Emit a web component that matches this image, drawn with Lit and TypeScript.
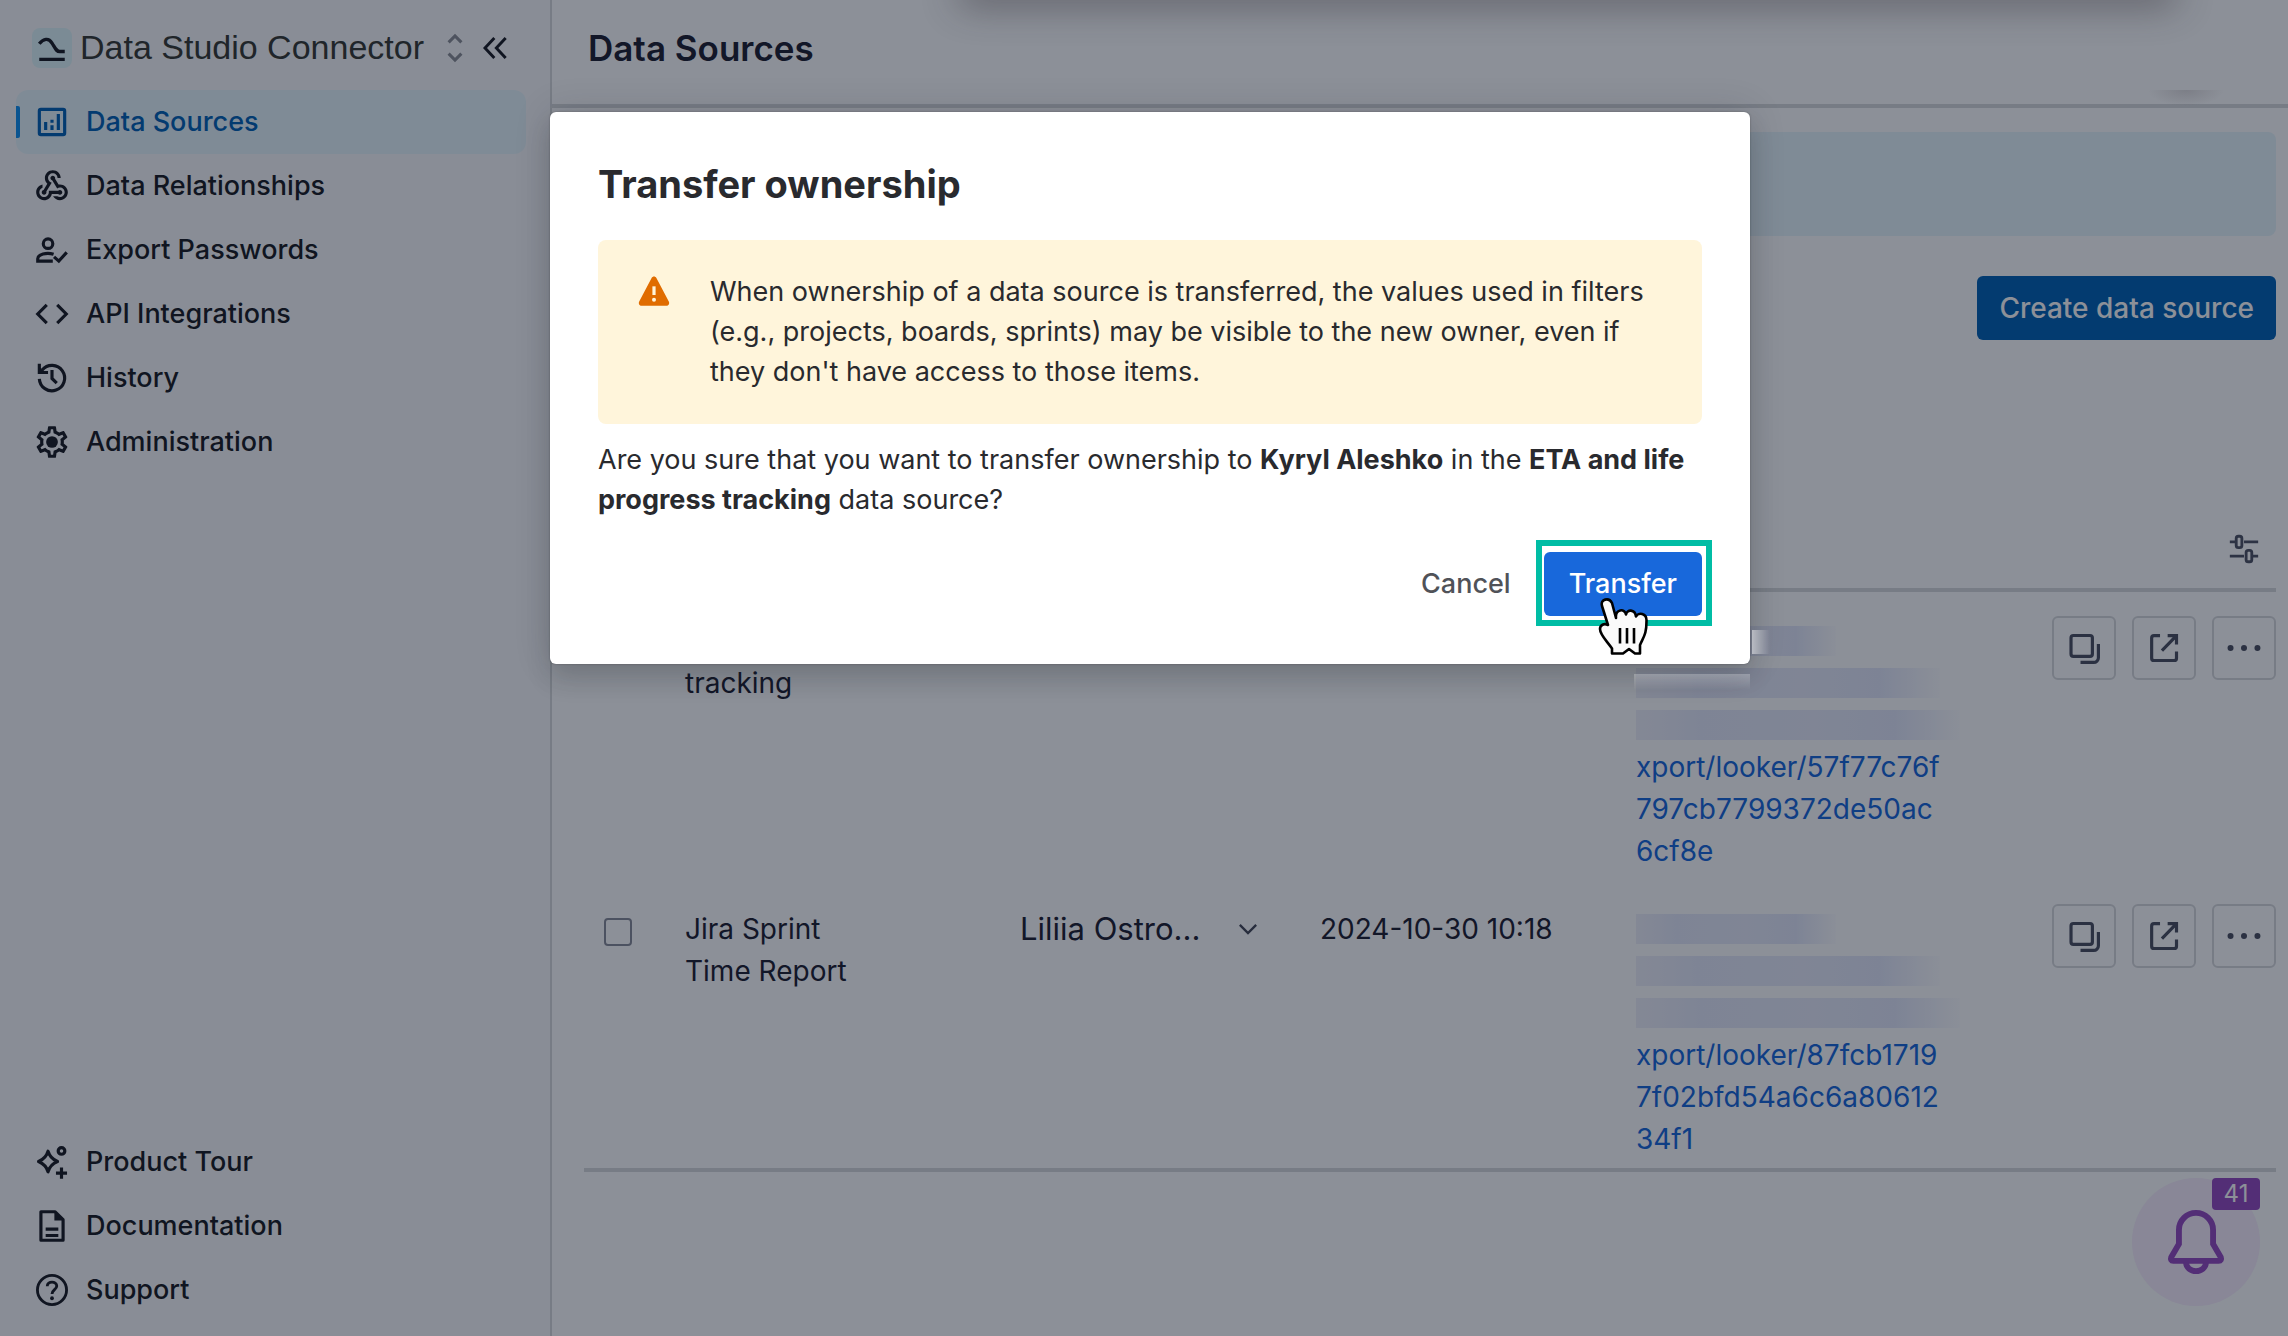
import { LitElement, html, css, svg, type TemplateResult } from "lit";
import { customElement, property } from "lit/decorators.js";

const icons: Record<string, TemplateResult> = {
  chart: svg`<rect x="4" y="4" width="16" height="16" rx="1" fill="none" stroke="currentColor" stroke-width="2"/><path d="M7 12h2v5H7zM11 14h2v3h-2zM11 10.500h2v2h-2zM15 7h2v10h-2z"/>`,
  webhook: svg`<path d="M10 15h5.880c.27-.31.67-.5 1.120-.5.83 0 1.500.67 1.500 1.500s-.67 1.500-1.500 1.500c-.44 0-.84-.19-1.120-.5H11.900c-.46 2.280-2.480 4-4.900 4-2.760 0-5-2.240-5-5 0-2.420 1.720-4.440 4-4.900v2.070c-1.160.41-2 1.530-2 2.830 0 1.650 1.350 3 3 3s3-1.350 3-3v-1zm2.500-11c1.650 0 3 1.350 3 3h2c0-2.760-2.240-5-5-5s-5 2.240-5 5c0 1.430.6 2.710 1.550 3.620l-2.350 3.900c-.68.14-1.200.75-1.200 1.480 0 .83.67 1.500 1.500 1.500s1.500-.67 1.500-1.500c0-.16-.02-.31-.07-.45l3.380-5.630C10.490 9.610 9.500 8.420 9.500 7c0-1.650 1.350-3 3-3zm4.500 9c-.64 0-1.230.2-1.720.54l-3.050-5.070C11.530 8.350 11 7.740 11 7c0-.83.67-1.500 1.500-1.500S14 6.170 14 7c0 .15-.02.29-.06.43l2.190 3.650c.28-.05.57-.08.87-.08 2.760 0 5 2.240 5 5s-2.240 5-5 5c-1.850 0-3.470-1.010-4.330-2.500h2.670c.48.32 1.050.5 1.660.5 1.650 0 3-1.350 3-3s-1.350-3-3-3z"/>`,
  person: svg`<g fill="none" stroke="currentColor" stroke-width="2"><circle cx="9.500" cy="8" r="3"/><path d="M13 14.700C8.500 13.200 3 14.800 3 17.500V19h9.500"/><path d="M13.300 16.300l3 2.700 5-5.500"/></g>`,
  code: svg`<path d="M8.700 6.300L3 12l5.700 5.700M15.300 6.300L21 12l-5.700 5.700" fill="none" stroke="currentColor" stroke-width="2"/>`,
  history: svg`<g fill="none" stroke="currentColor" stroke-width="2"><path d="M4 12.500A8 8 0 1 0 5.800 7"/><path d="M12 7v5.300l3 3" /><path d="M4 3v5.500h5.500"/></g><path d="M4 5l4.500 4H4z"/>`,
  gear: svg`<path d="M19.430 12.980c.04-.32.07-.64.07-.98 0-.34-.03-.66-.07-.98l2.110-1.650c.19-.15.24-.42.12-.64l-2-3.460c-.09-.16-.26-.25-.44-.25-.06 0-.12.01-.17.03l-2.490 1c-.52-.4-1.080-.73-1.690-.98l-.38-2.650C14.460 2.180 14.250 2 14 2h-4c-.25 0-.46.18-.49.42l-.38 2.650c-.61.25-1.170.59-1.690.98l-2.490-1c-.06-.02-.12-.03-.18-.03-.17 0-.34.09-.43.25l-2 3.460c-.13.22-.07.49.12.64l2.110 1.650c-.04.32-.07.65-.07.98 0 .33.03.66.07.98l-2.110 1.650c-.19.15-.24.42-.12.64l2 3.460c.09.16.26.25.44.25.06 0 .12-.01.17-.03l2.490-1c.52.4 1.080.73 1.690.98l.38 2.650c.03.24.24.42.49.42h4c.25 0 .46-.18.49-.42l.38-2.650c.61-.25 1.170-.59 1.690-.98l2.490 1c.06.02.12.03.18.03.17 0 .34-.09.43-.25l2-3.460c.12-.22.07-.49-.12-.64l-2.110-1.650zm-1.980-1.710c.04.31.05.52.05.73 0 .21-.02.43-.05.73l-.14 1.130.89.7 1.080.84-.7 1.210-1.270-.51-1.040-.42-.9.68c-.43.32-.84.56-1.250.73l-1.060.43-.16 1.130-.2 1.350h-1.400l-.19-1.350-.16-1.130-1.060-.43c-.43-.18-.83-.41-1.230-.71l-.91-.7-1.060.43-1.270.51-.7-1.210 1.080-.84.89-.7-.14-1.130c-.03-.31-.05-.54-.05-.74s.02-.43.05-.73l.14-1.130-.89-.7-1.080-.84.7-1.210 1.270.51 1.040.42.9-.68c.43-.32.84-.56 1.250-.73l1.060-.43.16-1.130.2-1.350h1.390l.19 1.350.16 1.130 1.060.43c.43.18.83.41 1.230.71l.91.7 1.060-.43 1.270-.51.7 1.210-1.070.85-.89.7.14 1.130z" fill-rule="evenodd"/><circle cx="12" cy="12" r="3.700"/>`,
  tour: svg`<path d="M9.500 5.200c1 3.500 2.500 5 6 6.500-3.500 1.400-5 3-6 6.500-1-3.500-2.500-5-6-6.500 3.500-1.500 5-3 6-6.500z" fill="none" stroke="currentColor" stroke-width="2" stroke-linejoin="round"/><circle cx="18" cy="5" r="2.100" fill="none" stroke="currentColor" stroke-width="2"/><path d="M18 15.500v7M14.500 19h7" stroke="currentColor" stroke-width="2"/>`,
  doc: svg`<path d="M5 3h9l5 5v13H5z" fill="none" stroke="currentColor" stroke-width="2" stroke-linejoin="round"/><path d="M13.500 3v5.500H19zM8 13h8v2H8zM8 17h8v2H8z"/>`,
  help: svg`<circle cx="12" cy="12" r="9.200" fill="none" stroke="currentColor" stroke-width="1.800"/><path d="M9 9.600C9 6.200 15 6.200 15 9.500c0 2.200-3 2.400-3 5" fill="none" stroke="currentColor" stroke-width="1.800"/><circle cx="12" cy="17.200" r="1.200"/>`,
  copy: svg`<rect x="3.800" y="4.100" width="13.500" height="13.200" rx="1.500" fill="none" stroke="currentColor" stroke-width="2"/><path d="M21.100 9.500v8.600a3 3 0 0 1-3 3H9.800" fill="none" stroke="currentColor" stroke-width="2"/>`,
  open: svg`<path d="M9.500 4.200H5.700A1.500 1.500 0 0 0 4.200 5.700v12.700a1.500 1.500 0 0 0 1.500 1.500h12.700a1.500 1.500 0 0 0 1.500-1.500V14.200M14.300 4.200h5.600v5.600M19.900 4.200l-9.200 9.500" fill="none" stroke="currentColor" stroke-width="2"/>`,
  more: svg`<circle cx="3.500" cy="12" r="1.900"/><circle cx="12" cy="12" r="1.900"/><circle cx="20.500" cy="12" r="1.900"/>`,
  sliders: svg`<g fill="none" stroke="currentColor" stroke-width="2"><path d="M2 7h4M12 7h10M2 17h10M18 17h4"/><rect x="6.500" y="3" width="4" height="8" rx="1.500"/><rect x="13.500" y="13" width="4" height="8" rx="1.500"/></g>`,
  chevron: svg`<path d="M5 8.500l7 7 7-7" fill="none" stroke="currentColor" stroke-width="2"/>`,
  updown: svg`<path d="M7.500 8L12 3.500 16.500 8M7.500 16l4.500 4.500 4.500-4.500" fill="none" stroke="currentColor" stroke-width="2.200"/>`,
  collapse: svg`<path d="M11.500 4.500L4.500 12l7 7.500M20 4.500L13 12l7 7.500" fill="none" stroke="currentColor" stroke-width="2.200"/>`,
  logo: svg`<path d="M3 9c3-3.500 6.500-4.500 9-.5s3 6 5.500 6H21M3 20h18" fill="none" stroke="currentColor" stroke-width="2.400"/>`,
  warning: svg`<path d="M10.200 2.200c.8-1.500 2.800-1.500 3.600 0l9.300 17.600c.8 1.500-.2 3.200-1.900 3.200H2.800C1.100 23 .1 21.300.9 19.800z"/><path d="M12 8.500v6.500" stroke="#fff5db" stroke-width="2.400"/><circle cx="12" cy="18.500" r="1.500" fill="#fff5db"/>`,
  bell: svg`<path d="M5.600 7.500a6.400 6.400 0 0 1 12.800 0v5.200l2.900 5c.3.800 0 1.400-.8 1.400H3.500c-.8 0-1.100-.6-.8-1.400l2.900-5z" fill="none" stroke="currentColor" stroke-width="2.200"/><path d="M8.300 19.800a3.700 3.100 0 0 0 7.400 0" fill="none" stroke="currentColor" stroke-width="2.200"/>`,
};

@customElement("ui-icon")
export class UiIcon extends LitElement {
  @property() name = "chart";
  static styles = css`
    :host { display: inline-flex; flex: none; width: 38px; height: 38px; }
    svg { width: 100%; height: 100%; fill: currentColor; overflow: visible; }
  `;
  render() {
    return html`<svg viewBox="0 0 24 24" aria-hidden="true">${icons[this.name]}</svg>`;
  }
}

interface Row {
  name: string[];
  owner: string;
  date: string;
  strips: string[];
  link: string[];
}

const rows: Row[] = [
  { name: ["ETA and life progress", "tracking"], owner: "", date: "", strips: ["s", "m", "l"], link: ["xport/looker/57f77c76f", "797cb7799372de50ac", "6cf8e"] },
  { name: ["Jira Sprint", "Time Report"], owner: "Liliia Ostro...", date: "2024-10-30 10:18", strips: ["s", "m", "l"], link: ["xport/looker/87fcb1719", "7f02bfd54a6c6a80612", "34f1"] },
];

const mainNav = [
  ["chart", "Data Sources"],
  ["webhook", "Data Relationships"],
  ["person", "Export Passwords"],
  ["code", "API Integrations"],
  ["history", "History"],
  ["gear", "Administration"],
];
const helpNav = [
  ["tour", "Product Tour"],
  ["doc", "Documentation"],
  ["help", "Support"],
];

@customElement("app-root")
export class AppRoot extends LitElement {
  static styles = css`
    * { box-sizing: border-box; }
    :host {
      display: block;
      position: relative;
      min-height: 100vh;
      overflow: hidden;
      font: 400 28px/42px Inter, "Liberation Sans", sans-serif;
      color: #1e2030;
      background: #fff;
    }
    button { font: inherit; color: inherit; background: none; border: 0; padding: 0; }
    a { text-decoration: none; color: inherit; }
    .page { display: grid; grid-template-columns: 552px minmax(0, 1fr); min-height: 100vh; }
    .side { display: flex; flex-direction: column; background: #fafafb; border-right: 2px solid #d9dadd; padding: 16px 24px 14px 16px; color: #1b1c24; }
    .brand { display: flex; align-items: center; height: 64px; margin-bottom: 10px; padding-left: 16px; }
    .logo { display: flex; align-items: center; justify-content: center; width: 40px; height: 40px; border-radius: 8px; background: #dff5fa; margin-right: 8px; }
    .logo ui-icon { width: 34px; height: 34px; }
    .app { font: 400 34px/40px "Liberation Sans", Arial, sans-serif; white-space: nowrap; color: #383a34; margin-right: 14px; padding-bottom: 2px; }
    .switch { display: flex; color: #8c8f96; }
    .switch ui-icon { width: 34px; height: 34px; }
    .fold { display: flex; margin-left: 6px; }
    .fold ui-icon { width: 34px; height: 32px; }
    .nav { display: flex; flex-direction: column; list-style: none; margin: 0; padding: 0; }
    .nav.end { margin-top: auto; }
    .item { display: flex; align-items: center; gap: 15px; height: 64px; padding-left: 17px; border-radius: 12px; font-size: 27px; font-weight: 500; }
    .item.on { background: #e8f5fb; color: #0262b6; position: relative; }
    .item.on::before { content: ""; position: absolute; left: 0; top: 16px; width: 4px; height: 32px; background: #1090f0; border-radius: 0 2px 2px 0; }
    .main { display: flex; flex-direction: column; }
    .top { display: flex; align-items: center; height: 108px; padding: 0 36px 8px; border-bottom: 4px solid #d9dadd; }
    h1 { margin: 0; font-size: 35px; line-height: 44px; font-weight: 600; }
    .content { padding: 24px 12px 0 32px; }
    .notice { height: 104px; border-radius: 8px; background: #e8f5fb; }
    .tools { display: flex; justify-content: flex-end; padding: 40px 0 168px; }
    .create { height: 64px; padding: 0 22px; border-radius: 6px; background: #0262b6; color: #fff; font-weight: 500; }
    table { width: 100%; border-collapse: separate; border-spacing: 0; table-layout: fixed; border-bottom: 4px solid #d9dadd; }
    .c-check { width: 81px; }
    .c-owner { width: 300px; }
    .c-date { width: 316px; }
    .c-link { width: 376px; }
    .c-act { width: 284px; }
    th { height: 84px; padding: 0 14px 2px 0; text-align: right; vertical-align: middle; border-bottom: 4px solid #d9dadd; color: #505464; }
    th ui-icon { width: 36px; height: 34px; vertical-align: middle; }
    td { height: 288px; vertical-align: top; padding: 28px 0 8px 20px; white-space: nowrap; }
    td.act { padding-top: 24px; }
    .check { appearance: none; display: block; width: 28px; height: 28px; margin: 10px 0 0; border: 2px solid #8a8d99; border-radius: 4px; }
    .owner { display: flex; align-items: center; justify-content: space-between; width: 100%; padding-right: 38px; font-size: 31px; line-height: 42px; }
    .owner ui-icon { width: 28px; height: 28px; color: #454858; }
    .url { display: block; color: #1868db; }
    .line { display: flex; align-items: center; height: 42px; }
    .strip { height: 30px; background: linear-gradient(90deg, #f0f1fa, #e6e9fa 20%, #e9ebf9 55%, #e4e8fa 80%, #fdfdff); }
    .strip.s { width: 200px; }
    .strip.m { width: 304px; }
    .strip.l { width: 324px; }
    .acts { display: flex; justify-content: flex-end; gap: 16px; }
    .sq { display: flex; align-items: center; justify-content: center; width: 64px; height: 64px; border: 2px solid #d9dadd; border-radius: 6px; color: #4c5061; }
    .sq ui-icon { width: 38px; height: 38px; }
    .bell { position: absolute; right: 28px; bottom: 30px; width: 128px; height: 128px; border-radius: 50%; background: #f9eefe; color: #964ac0; display: flex; align-items: center; justify-content: center; }
    .bell ui-icon { width: 64px; height: 64px; }
    .count { position: absolute; top: 0; right: 0; width: 48px; height: 32px; border-radius: 4px; background: #964ac0; color: #fff; font-size: 24px; line-height: 32px; text-align: center; }
    .blanket { position: absolute; inset: 0; display: flex; justify-content: center; align-items: flex-start; padding: 112px 0 0 12px; background: rgba(5, 12, 31, 0.46); overflow: hidden; }
    .window-shade { position: absolute; left: 42%; right: 5%; top: -24px; height: 20px; border-radius: 12px; box-shadow: 0 6px 36px 4px rgba(40, 36, 44, 0.45); }
    .avatar-shade { position: absolute; right: 64px; top: 90px; width: 76px; height: 16px; background: radial-gradient(50% 100% at 50% 0, rgba(60, 55, 65, 0.2), transparent); }
    .modal { position: relative; width: 1200px; max-width: 90%; padding: 48px; border-radius: 6px; background: #fff; color: #292a2e; font-size: 27px; line-height: 40px; box-shadow: 0 16px 24px rgba(30, 31, 33, 0.15), 0 0 36px rgba(30, 31, 43, 0.16), 0 0 2px rgba(30, 31, 33, 0.4); }
    .glare-side { position: absolute; left: 100%; top: 518px; width: 18px; height: 24px; margin-left: 2px; background: linear-gradient(90deg, rgba(255, 255, 255, 0.5), transparent); }
    .glare-foot { position: absolute; right: 0; top: 100%; width: 116px; height: 16px; margin-top: 10px; background: linear-gradient(rgba(255, 255, 255, 0.25), transparent); }
    h2 { margin: 0 0 32px; font-size: 38px; line-height: 48px; font-weight: 700; }
    .warn { display: flex; gap: 32px; padding: 32px; border-radius: 8px; background: #fff5db; }
    .warn ui-icon { width: 32px; height: 32px; margin: 3px 8px; color: #e06c00; }
    p { margin: 0; }
    .ask { margin: 16px 0 32px; }
    b { font-weight: 700; }
    .foot { display: flex; justify-content: flex-end; gap: 8px; }
    .btn { position: relative; height: 64px; padding: 0 25px; border-radius: 6px; font-weight: 500; color: #505258; }
    .btn.primary { background: #1868db; color: #fff; }
    .ring { position: absolute; inset: -12px -10px -10px -8px; border: 6px solid #00bda5; }
    .hand { position: absolute; left: 54px; top: 46px; width: 50px; height: 58px; }
  `;

  private navItem([icon, label]: string[], i = -1) {
    return html`<li><a href="#" class="item ${i === 0 ? "on" : ""}"><ui-icon name=${icon}></ui-icon>${label}</a></li>`;
  }

  private row(r: Row) {
    return html`<tr>
      <td><input class="check" type="checkbox" aria-label=${r.name.join(" ")} /></td>
      <td>${r.name[0]}<br />${r.name[1]}</td>
      <td>${r.owner ? html`<button class="owner">${r.owner}<ui-icon name="chevron"></ui-icon></button>` : ""}</td>
      <td>${r.date}</td>
      <td><a class="url" href="#">
        ${r.strips.map((s) => html`<span class="line"><span class="strip ${s}"></span></span>`)}
        ${r.link.map((l) => html`<span class="line">${l}</span>`)}
      </a></td>
      <td class="act"><div class="acts">
        <button class="sq" aria-label="Copy"><ui-icon name="copy"></ui-icon></button>
        <button class="sq" aria-label="Open"><ui-icon name="open"></ui-icon></button>
        <button class="sq" aria-label="More"><ui-icon name="more"></ui-icon></button>
      </div></td>
    </tr>`;
  }

  render() {
    return html`
      <div class="page">
        <aside class="side">
          <div class="brand">
            <span class="logo"><ui-icon name="logo"></ui-icon></span>
            <span class="app">Data Studio Connector</span>
            <button class="switch" aria-label="Switch app"><ui-icon name="updown"></ui-icon></button>
            <button class="fold" aria-label="Collapse sidebar"><ui-icon name="collapse"></ui-icon></button>
          </div>
          <ul class="nav">${mainNav.map((n, i) => this.navItem(n, i))}</ul>
          <ul class="nav end">${helpNav.map((n) => this.navItem(n))}</ul>
        </aside>
        <main class="main">
          <header class="top"><h1>Data Sources</h1></header>
          <div class="content">
            <div class="notice"></div>
            <div class="tools"><button class="create">Create data source</button></div>
            <table>
              <colgroup><col class="c-check" /><col /><col class="c-owner" /><col class="c-date" /><col class="c-link" /><col class="c-act" /></colgroup>
              <thead><tr><th colspan="6"><button aria-label="Table settings"><ui-icon name="sliders"></ui-icon></button></th></tr></thead>
              <tbody>${rows.map((r) => this.row(r))}</tbody>
            </table>
          </div>
        </main>
      </div>
      <button class="bell" aria-label="Notifications"><ui-icon name="bell"></ui-icon><span class="count">41</span></button>
      <div class="blanket">
        <div class="window-shade"></div>
        <div class="avatar-shade"></div>
        <section class="modal" role="dialog" aria-modal="true" aria-labelledby="title">
          <h2 id="title">Transfer ownership</h2>
          <div class="warn">
            <ui-icon name="warning"></ui-icon>
            <p>When ownership of a data source is transferred, the values used in filters (e.g., projects, boards, sprints) may be visible to the new owner, even if they don't have access to those items.</p>
          </div>
          <p class="ask">Are you sure that you want to transfer ownership to <b>Kyryl Aleshko</b> in the <b>ETA and life progress tracking</b> data source?</p>
          <div class="foot">
            <button class="btn">Cancel</button>
            <button class="btn primary">Transfer
              <span class="ring"></span>
              <svg class="hand" viewBox="0 0 50 58" aria-hidden="true">
                <path d="M14 55.500v-5C9 43 2 37 2 31c0-4 4-6 8-4L4 8C2 1 11-1 14 5l4 15C17 11 27 10 28 16.500 29 11 37 11 38 18.500 40 14 49 15 48.500 23 48.500 36 46 38 42 47v8.500h-5L31 51l-6 4.500z" fill="#fafafa" stroke="#000" stroke-width="2.600" stroke-linejoin="round"/>
                <path d="M22 30v15.500M29 30v15.500M36 30v15.500" stroke="#000" stroke-width="2.600"/>
              </svg>
            </button>
          </div>
          <span class="glare-side"></span>
          <span class="glare-foot"></span>
        </section>
      </div>
    `;
  }
}
